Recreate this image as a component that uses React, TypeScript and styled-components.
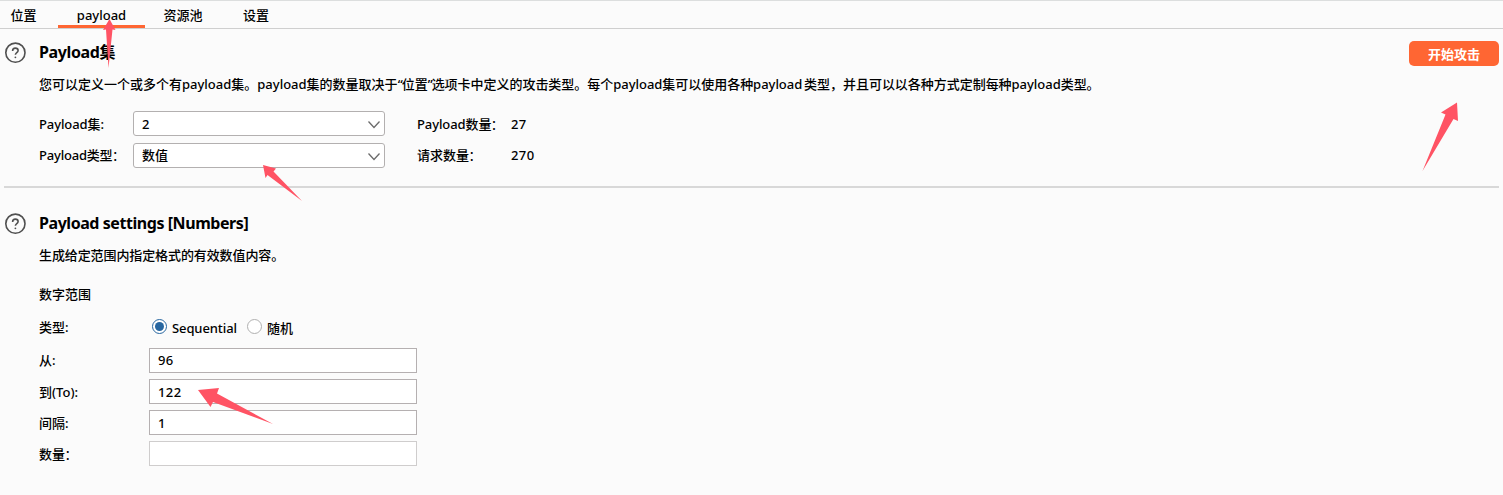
import React from "react";
import styled, { createGlobalStyle } from "styled-components";

const GlobalStyle = createGlobalStyle`
  * { box-sizing: border-box; }
  body {
    margin: 0;
    background: #fbfbfb;
    color: #000;
    font: 500 13px/20px "Noto Sans", "Noto Sans CJK SC", sans-serif;
    white-space: nowrap;
  }
`;

const Page = styled.main`
  position: relative;
  width: 1503px;
  height: 495px;
  overflow: hidden;
`;

const TabBar = styled.nav`
  display: flex;
  height: 29px;
  border-top: 1px solid #dcdede;
  border-bottom: 1px solid #cfcfcf;
`;

const Tab = styled.div<{ $width: number; $active?: boolean }>`
  width: ${(p) => p.$width}px;
  height: 27px;
  padding-top: 4px;
  text-align: center;
  border-bottom: 3px solid ${(p) => (p.$active ? "#ff6633" : "transparent")};
`;

const Section = styled.section<{ $height: number; $top: number }>`
  display: flex;
  height: ${(p) => p.$height}px;
  margin: 0 4px;
  padding-top: ${(p) => p.$top}px;
`;

const Divider = styled.hr`
  height: 2px;
  margin: 0 4px;
  border: 0;
  background: #d8d8d8;
`;

const HelpSlot = styled.div`
  width: 35px;
  padding-top: 2px;
  svg { display: block; }
`;

const Body = styled.div`
  flex: 1;
`;

const Title = styled.h2`
  margin: 0;
  height: 24px;
  font-size: 16px;
  line-height: 24px;
  font-weight: 700;
`;

const Spaced = styled.span<{ $spacing?: number }>`
  letter-spacing: ${(p) => p.$spacing ?? 0}px;
`;

const WideColon = styled.span`
  margin-left: -0.5px;
  font-weight: 400;
  &::after { content: "："; }
`;

const Description = styled.p`
  height: 20px;
  margin: 10px 0 0;
  word-spacing: -1.5px;
`;

const SelectGrid = styled.div`
  display: grid;
  grid-template-columns: 94px 284px 94px auto;
  grid-auto-rows: 25px;
  row-gap: 7px;
  margin-top: 17px;
`;

const SelectText = styled.span<{ $line: number; $spacing?: number }>`
  line-height: ${(p) => p.$line}px;
  letter-spacing: ${(p) => p.$spacing ?? 0}px;
`;

const SelectBox = styled.div<{ $line: number }>`
  display: flex;
  justify-content: space-between;
  width: 252px;
  height: 25px;
  padding: 0 3px 0 8px;
  border: 1px solid #b3b0b0;
  border-radius: 3px;
  background: #fff;
  line-height: ${(p) => p.$line}px;
  svg { margin-top: 8px; }
`;

const StartButton = styled.button`
  width: 90px;
  height: 25px;
  margin-top: 1px;
  padding: 1px 0 0;
  border: 0;
  border-radius: 5px;
  background: #ff6633;
  color: #fff;
  font: 700 13px/20px "Noto Sans", "Noto Sans CJK SC", sans-serif;
`;

const RangeTitle = styled.div`
  height: 20px;
  margin-top: 19px;
`;

const FieldGrid = styled.div`
  display: grid;
  grid-template-columns: 110px 268px;
  grid-template-rows: 26px repeat(4, 25px);
  row-gap: 6px;
  margin-top: 12px;
`;

const FieldLabel = styled.span<{ $line: number }>`
  line-height: ${(p) => p.$line}px;
`;

const RadioRow = styled.div`
  display: flex;
  align-items: center;
  height: 23px;
  padding-left: 3px;
`;

const RadioDot = styled.span<{ $checked?: boolean }>`
  display: grid;
  place-items: center;
  width: 15px;
  height: 15px;
  margin-top: -2px;
  border: ${(p) => (p.$checked ? "1.5px solid #2766a0" : "1px solid #b0b0b0")};
  border-radius: 50%;
  background: #fff;
  &::after {
    content: "";
    width: 9px;
    height: 9px;
    border-radius: 50%;
    background: ${(p) => (p.$checked ? "#2766a0" : "transparent")};
  }
`;

const RadioText = styled.span<{ $width: number }>`
  width: ${(p) => p.$width}px;
  padding-left: 5px;
`;

const Field = styled.div<{ $line?: number; $disabled?: boolean }>`
  height: 25px;
  padding-left: 8px;
  border: 1px solid ${(p) => (p.$disabled ? "#cfcdcd" : "#b5b0b1")};
  background: #fff;
  line-height: ${(p) => p.$line ?? 25}px;
  letter-spacing: 0.4px;
`;

const Arrows = styled.svg`
  position: absolute;
  inset: 0;
  pointer-events: none;
`;

const HelpIcon = () => (
  <svg width="23" height="23" viewBox="0 0 23 23" fill="none" stroke="#505050" strokeWidth="1.6">
    <circle cx="11.4" cy="10.7" r="9.6" />
    <path d="M8.6 8.9C8.6 7 9.7 6.1 11.3 6.1C13 6.1 14.1 7 14.1 8.5C14.1 10.6 11.4 10.6 11.4 12.8" />
    <circle cx="11.4" cy="15.3" r="0.9" fill="#505050" stroke="none" />
  </svg>
);

const Chevron = () => (
  <svg width="14" height="9" viewBox="0 0 14 9" fill="none" stroke="#6b6b6b" strokeWidth="1.3">
    <path d="M1.500 1.5L7 7.5L12.5 1.5" />
  </svg>
);

export default function App() {
  return (
    <>
      <GlobalStyle />
      <Page>
        <TabBar>
          <Tab $width={47}>位置</Tab>
          <Tab $width={11} />
          <Tab $width={87} $active>payload</Tab>
          <Tab $width={76}>资源池</Tab>
          <Tab $width={70}>设置</Tab>
        </TabBar>
        <Section $height={157} $top={11}>
          <HelpSlot><HelpIcon /></HelpSlot>
          <Body>
            <Title><Spaced $spacing={-0.38}>Payload集</Spaced></Title>
            <Description>
              您可以定义一个或多个有payload集。payload集的数量取决于<Spaced $spacing={-1}>“</Spaced>位置<Spaced $spacing={-1}>”</Spaced>
              <Spaced $spacing={-0.03}>选项卡中定义的攻击类型。每个payload集可以使用各种payload 类型，并且可以以各种方式定制每种payload类型。</Spaced>
            </Description>
            <SelectGrid>
              <SelectText $line={26} $spacing={-0.1}>Payload集:</SelectText>
              <SelectBox $line={25}>2<Chevron /></SelectBox>
              <SelectText $line={26} $spacing={-0.1}>Payload数量<WideColon /></SelectText>
              <SelectText $line={26} $spacing={0.4}>27</SelectText>
              <SelectText $line={25} $spacing={-0.2}>Payload类型<WideColon /></SelectText>
              <SelectBox $line={23}>数值<Chevron /></SelectBox>
              <SelectText $line={25}>请求数量<WideColon /></SelectText>
              <SelectText $line={25} $spacing={0.4}>270</SelectText>
            </SelectGrid>
          </Body>
          <StartButton>开始攻击</StartButton>
        </Section>
        <Divider />
        <Section $height={300} $top={23}>
          <HelpSlot><HelpIcon /></HelpSlot>
          <Body>
            <Title><Spaced $spacing={-0.44}>Payload settings [Numbers]</Spaced></Title>
            <Description><Spaced $spacing={-0.1}>生成给定范围内指定格式的有效数值内容。</Spaced></Description>
            <RangeTitle>数字范围</RangeTitle>
            <FieldGrid>
              <FieldLabel $line={23}>类型:</FieldLabel>
              <RadioRow>
                <RadioDot $checked />
                <RadioText $width={80}><Spaced $spacing={-0.1}>Sequential</Spaced></RadioText>
                <RadioDot />
                <RadioText $width={50}>随机</RadioText>
              </RadioRow>
              <FieldLabel $line={25}>从:</FieldLabel>
              <Field $line={23}>96</Field>
              <FieldLabel $line={27}>到(To):</FieldLabel>
              <Field>122</Field>
              <FieldLabel $line={27}>间隔:</FieldLabel>
              <Field>1</Field>
              <FieldLabel $line={27}>数量<WideColon /></FieldLabel>
              <Field $disabled />
            </FieldGrid>
          </Body>
        </Section>
        <Arrows width="1503" height="495" viewBox="0 0 1503 495" fill="#ff5364">
          <path d="M109.5 19L115.5 30L112.500 29.5L108.5 68L106 29.5L103 30Z" />
          <path d="M263 165L276 168.500L273.500 171.5L302 201L267.5 175L265.500 178Z" />
          <path d="M1457 102.5L1458 121L1453.5 119L1422.5 171L1445.5 114.5L1441 112.5Z" />
          <path d="M198 390L219 388L217 393.5L273 424L213 402L210.500 407Z" />
        </Arrows>
      </Page>
    </>
  );
}
